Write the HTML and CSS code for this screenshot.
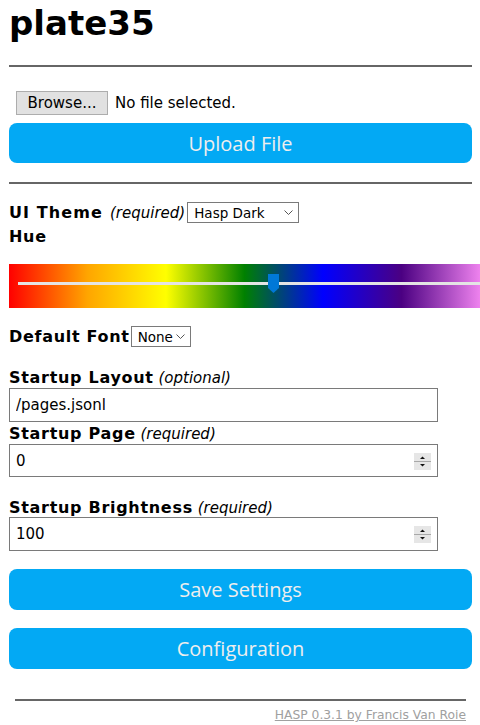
FILE: index.html
```
<!DOCTYPE html>
<html lang="en">
<head>
<meta charset="utf-8">
<title>plate35</title>
<link rel="stylesheet" href="styles.css">
</head>
<body>
<main class="page">
  <h1 class="title">plate35</h1>
  <div class="rule"></div>
  <form class="upload">
    <div class="file-row">
      <span class="browse">Browse...</span>
      <span class="file-name">No file selected.</span>
    </div>
    <button type="button" class="btn">Upload File</button>
  </form>
  <div class="rule rule-2"></div>
  <form class="settings">
    <div class="row row-theme">
      <b class="label">UI Theme</b>
      <i class="hint">(required)</i>
      <span class="select-wrap theme-select">
        <select class="select"><option>Hasp Dark</option></select>
        <svg class="chevron" width="9" height="5" viewBox="0 0 9 5"><polyline points="0.5,0.5 4.5,4.5 8.5,0.5" fill="none" stroke="#555" stroke-width="1"/></svg>
      </span>
    </div>
    <div class="label hue-label">Hue</div>
    <div class="hue">
      <div class="track"></div>
      <div class="thumb"></div>
    </div>
    <div class="row row-font">
      <b class="label">Default Font</b>
      <span class="select-wrap font-select">
        <select class="select"><option>None</option></select>
        <svg class="chevron" width="9" height="5" viewBox="0 0 9 5"><polyline points="0.5,0.5 4.5,4.5 8.5,0.5" fill="none" stroke="#555" stroke-width="1"/></svg>
      </span>
    </div>
    <div class="field-label first"><b class="label">Startup Layout</b> <i class="hint">(optional)</i></div>
    <input class="text-input tall" type="text" value="/pages.jsonl">
    <div class="field-label close"><b class="label">Startup Page</b> <i class="hint">(required)</i></div>
    <div class="num-wrap">
      <input class="text-input num" type="number" value="0">
      <svg class="spin" width="17" height="17" viewBox="0 0 17 17"><rect width="17" height="17" fill="#e6e6e6"/><line x1="0" y1="8.5" x2="17" y2="8.5" stroke="#a8a8a8" stroke-width="1"/><polygon points="6,6 11,6 8.5,3.5" fill="#111"/><polygon points="6,11 11,11 8.5,13.5" fill="#111"/></svg>
    </div>
    <div class="field-label far"><b class="label">Startup Brightness</b> <i class="hint">(required)</i></div>
    <div class="num-wrap">
      <input class="text-input num tall" type="number" value="100">
      <svg class="spin" width="17" height="17" viewBox="0 0 17 17"><rect width="17" height="17" fill="#e6e6e6"/><line x1="0" y1="8.5" x2="17" y2="8.5" stroke="#a8a8a8" stroke-width="1"/><polygon points="6,6 11,6 8.5,3.5" fill="#111"/><polygon points="6,11 11,11 8.5,13.5" fill="#111"/></svg>
    </div>
    <button type="button" class="btn btn-save">Save Settings</button>
    <button type="button" class="btn btn-config">Configuration</button>
  </form>
  <div class="rule rule-foot"></div>
  <footer class="footer"><a class="footer-link" href="#">HASP 0.3.1 by Francis Van Roie</a></footer>
</main>
</body>
</html>
```

FILE: styles.css
```
html, body {
  margin: 0;
  padding: 0;
  background: #fff;
}
body {
  font-family: "DejaVu Sans", Verdana, sans-serif;
  font-size: 15px;
  color: #000;
  overflow: hidden;
}
.page {
  padding: 0 8px 0 9px;
}
.title {
  margin: 4px 0 0;
  font-size: 34px;
  line-height: 38px;
  font-weight: bold;
}
.rule {
  height: 2px;
  background: #666;
  margin-top: 23px;
}
.upload, .settings {
  margin: 0;
}
.file-row {
  display: flex;
  align-items: center;
  margin: 24px 0 0 7px;
  height: 24px;
}
.browse {
  display: flex;
  align-items: center;
  justify-content: center;
  box-sizing: border-box;
  width: 92px;
  height: 24px;
  background: #e1e1e1;
  border: 1px solid #adadad;
  font-size: 15px;
}
.file-name {
  margin-left: 7px;
}
.btn {
  display: flex;
  align-items: center;
  justify-content: center;
  width: 100%;
  height: 40px;
  margin-top: 8px;
  padding: 0;
  border: 0;
  border-radius: 8px;
  background: #03a9f4;
  color: #eee;
  font-family: "Open Sans", sans-serif;
  font-size: 20px;
}
.rule-2 {
  margin-top: 19px;
}
.row {
  display: flex;
  align-items: center;
  height: 21px;
}
.row-theme {
  margin-top: 18px;
}
.label {
  font-size: 16px;
  font-weight: bold;
  letter-spacing: 0.7px;
}
.row-theme .label {
  letter-spacing: 1.1px;
}
.hint {
  font-style: italic;
  font-weight: normal;
  letter-spacing: 0;
}
.row-theme .hint {
  margin-left: 7px;
}
.select-wrap {
  position: relative;
  display: inline-block;
  height: 21px;
}
.theme-select {
  width: 112px;
  margin-left: 2px;
}
.font-select {
  width: 60px;
  margin-left: 1px;
}
.select {
  appearance: none;
  -webkit-appearance: none;
  box-sizing: border-box;
  width: 100%;
  height: 21px;
  margin: 0;
  padding: 0 0 0 6px;
  border: 1px solid #7a7a7a;
  border-radius: 0;
  background: #fff;
  color: #000;
  font-family: "DejaVu Sans", Verdana, sans-serif;
  font-size: 13.5px;
}
.chevron {
  position: absolute;
  right: 6px;
  top: 8px;
}
.hue-label {
  margin-top: 5px;
  line-height: 18px;
}
.hue {
  position: relative;
  height: 44px;
  margin: 18px -8px 0 0;
  background: linear-gradient(to right, red, orange, yellow, green, blue, indigo, violet);
}
.track {
  position: absolute;
  left: 9px;
  right: 0;
  top: 18px;
  height: 3px;
  background: #e4e4e4;
}
.thumb {
  position: absolute;
  left: 259px;
  top: 10px;
  width: 11px;
  height: 19px;
  background: #0078d7;
  clip-path: polygon(0 0, 100% 0, 100% 74%, 50% 100%, 0 74%);
}
.row-font {
  margin-top: 18px;
}
.field-label {
  line-height: 18px;
}
.field-label.first {
  margin-top: 22px;
}
.field-label.close {
  margin-top: 3px;
}
.field-label.far {
  margin-top: 22px;
}
.text-input {
  display: block;
  box-sizing: border-box;
  width: 429px;
  height: 33px;
  margin: 1px 0 0;
  padding: 0 6px;
  border: 1px solid #7a7a7a;
  border-radius: 0;
  background: #fff;
  color: #000;
  font-family: "DejaVu Sans", Verdana, sans-serif;
  font-size: 15px;
  outline: none;
}
.text-input.tall {
  height: 34px;
}
.num-wrap {
  position: relative;
  width: 429px;
}
.num-wrap + .field-label {
  margin-top: 22px;
}
.far + .num-wrap .text-input {
  margin-top: 0;
}
.num {
  -moz-appearance: textfield;
  appearance: textfield;
}
.num::-webkit-inner-spin-button,
.num::-webkit-outer-spin-button {
  -webkit-appearance: none;
  margin: 0;
}
.spin {
  position: absolute;
  right: 7px;
  top: 9px;
}
.btn-save {
  margin-top: 18px;
  height: 41px;
}
.btn-config {
  margin-top: 18px;
  height: 41px;
}
.rule-foot {
  margin: 30px 6px 0;
}
.footer {
  margin-top: 7px;
  padding-right: 6px;
  text-align: right;
  font-size: 12.3px;
  line-height: 14px;
}
.footer-link {
  color: #a0a0a0;
  text-decoration: underline;
}
```
